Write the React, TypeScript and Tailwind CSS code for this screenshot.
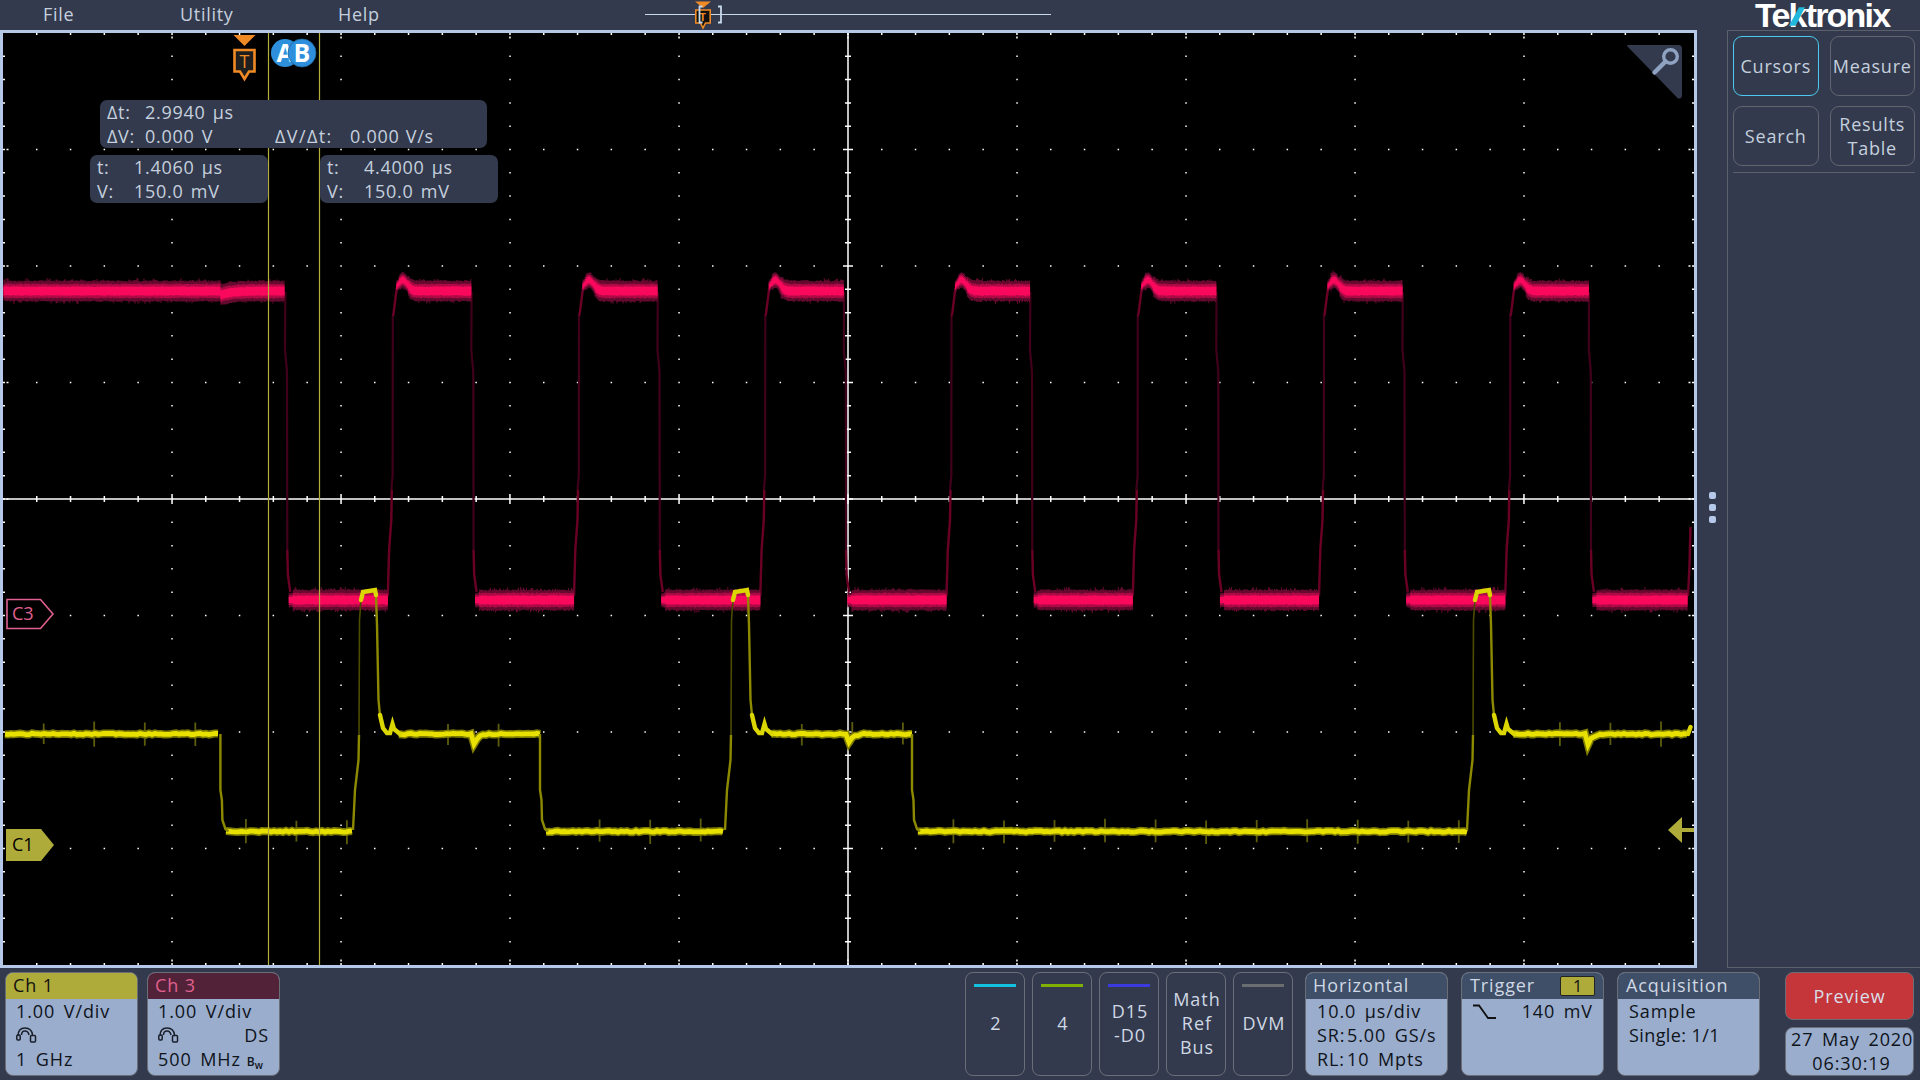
import React from 'react';

// seeded noise so the trace looks the same on every load
let seed = 12345;
const rnd = () => {
  seed = (seed * 16807) % 2147483647;
  return seed / 2147483647;
};
const f = (n: number) => n.toFixed(1);

const X0 = 3;
const Y0 = 33;
const X1 = 1694;
const Y1 = 965;
const DX = 33.8;

// ---- red trace (C3) ----
const redFalls = [0, 1, 2, 3, 4, 5, 6, 7].map((k) => 285.3 + 186.25 * k);
const redRises = redFalls.map((x) => x + 101.5);

function buildRed() {
  const layers = ['', '', ''];
  const col = (x: number, c: number, scale: number) => {
    const dim = 9.5 + (rnd() > 0.8 ? 3.5 * rnd() : 1.5 * rnd());
    const dim2 = 9.5 + (rnd() > 0.8 ? 3.5 * rnd() : 1.5 * rnd());
    layers[0] += `M${f(x)} ${f(c - dim * scale)}V${f(c + dim2 * scale)}`;
    layers[1] += `M${f(x)} ${f(c - (6.5 + rnd()) * scale)}V${f(c + (6.5 + rnd()) * scale)}`;
    layers[2] += `M${f(x)} ${f(c - (4 + rnd() * 0.8) * scale)}V${f(c + (4 + rnd() * 0.8) * scale)}`;
  };
  for (let x = 4; x < 285; x += 1) {
    const dip = x >= 221 ? 4 * Math.exp(-(x - 221) / 10) : 0;
    col(x, 291 + dip, 1);
  }
  redRises.forEach((xr, i) => {
    const end = redFalls[i + 1];
    if (!end) return;
    for (let x = xr + 10; x < end; x += 1) {
      const t = x - xr;
      const c = 291 - 11 * Math.exp(-Math.pow((t - 16) / 6.5, 2));
      const s = t < 13 ? 0.55 : t < 22 ? 0.75 : 1;
      col(x, c, s);
    }
  });
  redFalls.forEach((xf, i) => {
    const end = i === 7 ? 1688 : redRises[i] + 1;
    for (let x = xf + 4; x < end; x += 1) {
      const s = x < xf + 8 ? 0.7 : 1;
      col(x, 600, s);
    }
  });
  return layers;
}
const redLayers = buildRed();

const poly = (pts: number[][]) => pts.map((p, i) => (i ? 'L' : 'M') + f(p[0]) + ' ' + f(p[1])).join('');

const redDim =
  redFalls.map((x) => poly([[x, 292], [x - 0.3, 350], [x + 1.7, 372], [x + 2, 550]])).join('') +
  redRises.slice(0, 7).map((x) => poly([[x + 4.5, 490], [x + 5.8, 476], [x + 6, 316]])).join('');
const redMid =
  redFalls.map((x) => poly([[x + 2, 550], [x + 2.6, 575], [x + 5, 592]])).join('') +
  redRises.slice(0, 7).map((x) => poly([[x + 1, 596], [x + 2.3, 550], [x + 4.5, 520], [x + 5, 490]])).join('') +
  redRises.slice(0, 7).map((x) => poly([[x + 6, 316], [x + 6.8, 313], [x + 10, 288]])).join('') +
  poly([[1688, 596], [1689.5, 565], [1690.5, 527]]);

// ---- yellow trace (C1) ----
const HI = 734;
const LO = 831.5;
const yFalls = [220.4, 540, 912];
const yRises = [353, 725, 1467];
const notches = [473, 847.5, 1587];

function flat(x0: number, x1: number, y: number) {
  const pts: number[][] = [];
  for (let x = x0; x <= x1; x += 3) {
    let d = 0;
    for (const n of notches) {
      if (y === HI && x >= n && x < n + 16) d = 13 * Math.exp(-(x - n) / 4);
    }
    pts.push([x, y + d + (rnd() - 0.5) * 1.4]);
  }
  return pts;
}

const yBright = [
  flat(5, 220, HI),
  flat(226, yRises[0], LO),
  flat(399, yFalls[1], HI),
  flat(546, yRises[1], LO),
  flat(771, yFalls[2], HI),
  flat(918, yRises[2], LO),
  flat(1513, 1688, HI),
]
  .map(poly)
  .join('');

const yRiseLow = (r: number) => poly([[r, 830], [r + 2, 790], [r + 5.5, 760], [r + 6, 735]]);
const yRiseUp = (r: number) => poly([[r + 6, 735], [r + 6.5, 620], [r + 8, 600]]);
const yTop = (r: number) => poly([[r + 8, 600], [r + 10, 592], [r + 22, 590], [r + 23, 595]]);
const yTail = (r: number) => poly([[r + 23, 595], [r + 24, 625], [r + 25.5, 700], [r + 27, 715]]);
const yFoot = (r: number) => poly([[r + 27, 715], [r + 30, 728], [r + 34, 733], [r + 37, 733], [r + 39.5, 724], [r + 41, 729], [r + 47, 734]]);
const yFall = (x: number) => poly([[x, 734], [x, 790], [x + 1.5, 800], [x + 2, 820], [x + 5, 829], [x + 8, 831.5]]);

const yMid = yRises.map(yRiseLow).join('') + yFalls.map(yFall).join('') + yRises.map(yTail).join('');
const yDim = yRises.map(yRiseUp).join('');
const yTops = yRises.map(yTop).join('') + yRises.map(yFoot).join('') + poly([[1688, 734], [1690.5, 727]]);

function buildSpikes() {
  let d = '';
  for (let k = 0; k < 33; k++) {
    const x = 43.7 + 50.54 * k;
    let y = -1;
    if (x < 215 || (x > 402 && x < 538) || (x > 772 && x < 908) || (x > 1514 && x < 1690)) y = HI;
    if ((x > 232 && x < 350) || (x > 552 && x < 722) || (x > 924 && x < 1464)) y = LO;
    if (y < 0) continue;
    d += `M${f(x)} ${f(y - 10 - rnd() * 3)}V${f(y + 10 + rnd() * 3)}`;
  }
  return d;
}
const ySpikes = buildSpikes();

// ---- graticule ----
function buildGrid() {
  let dots = '';
  const dot = (x: number, y: number) => {
    dots += `M${f(x)} ${f(y - 0.75)}h1.5v1.5h-1.5z`;
  };
  for (let i = 1; i < 10; i++) {
    const x = X0 + 169 * i;
    if (i === 5) continue;
    for (let j = 1; j < 40; j++) dot(x - 0.75, 33 + (j * 932) / 40);
  }
  for (let i = 1; i < 8; i++) {
    const y = 33 + 116.5 * i;
    if (i === 4) continue;
    for (let j = 1; j < 50; j++) dot(X0 + j * DX - 0.75, y);
  }
  // edge ticks
  for (let j = 1; j < 50; j++) {
    const x = X0 + j * DX - 0.75;
    const major = j % 5 === 0;
    dots += `M${f(x)} ${Y0}h1.5v2h-1.5z`;
    dots += `M${f(x)} ${Y1 - 2}h1.5v2h-1.5z`;
    if (major) {
      dots += `M${f(x)} ${Y0 + 3.5}h1.5v2h-1.5z`;
      dots += `M${f(x)} ${Y1 - 5.5}h1.5v2h-1.5z`;
    }
  }
  for (let j = 1; j < 40; j++) {
    const y = 33 + (j * 932) / 40 - 0.75;
    const major = j % 5 === 0;
    dots += `M${X0} ${f(y)}h2v1.5h-2z`;
    dots += `M${X1 - 2} ${f(y)}h2v1.5h-2z`;
    if (major) {
      dots += `M${X0 + 3.5} ${f(y)}h2v1.5h-2z`;
      dots += `M${X1 - 5.5} ${f(y)}h2v1.5h-2z`;
    }
  }
  // centre line ticks
  for (let j = 1; j < 50; j++) {
    const x = X0 + j * DX - 0.75;
    const h = j % 5 === 0 ? 5 : 3;
    dots += `M${f(x)} ${499 - h}h1.5v${h * 2}h-1.5z`;
  }
  for (let j = 1; j < 40; j++) {
    const y = 33 + (j * 932) / 40 - 0.75;
    const w = j % 5 === 0 ? 5 : 3;
    dots += `M${848 - w} ${f(y)}h${w * 2}v1.5h-${w * 2}z`;
  }
  return dots;
}
const gridDots = buildGrid();

function Scope() {
  return (
    <svg className="absolute inset-0 w-full h-full" viewBox={`${X0} ${Y0} ${X1 - X0} ${Y1 - Y0}`}>
      <path d={gridDots} fill="#fff" />
      <path d="M848 33V965M3 499H1694" stroke="#fff" strokeWidth="1.5" fill="none" />

      {/* C3 */}
      <path d={redDim} stroke="#40001a" strokeWidth="2.2" fill="none" />
      <path d={redMid} stroke="#6a0026" strokeWidth="2.4" fill="none" />
      <path d={redLayers[0]} stroke="#640a2e" strokeWidth="1.1" />
      <path d={redLayers[1]} stroke="#b00a46" strokeWidth="1.1" />
      <path d={redLayers[2]} stroke="#fa085c" strokeWidth="1.1" />

      {/* C1 */}
      <path d={ySpikes} stroke="#5c5c0c" strokeWidth="1.8" fill="none" />
      <path d={yBright} stroke="#7d7b00" strokeWidth="8" fill="none" />
      <path d={yBright} stroke="#e8e100" strokeWidth="4.8" fill="none" />
      <path d={yDim} stroke="#4c4c00" strokeWidth="1.6" fill="none" />
      <path d={yMid} stroke="#8d8a00" strokeWidth="2.4" fill="none" />
      <path d={yTops} stroke="#dcd600" strokeWidth="4.4" fill="none" strokeLinecap="round" />

      {/* cursors */}
      <path d="M268.5 33V965M319.5 33V965" stroke="#b5ad3c" strokeWidth="1.2" />

      {/* trigger position */}
      <path d="M233.5 35H255.5L244.5 46Z" fill="#f08a24" />
      <path d="M234.5 50H254.5V71.5H249L244.5 79L240 71.5H234.5Z" fill="#1f1f1f" stroke="#f08a24" strokeWidth="2.6" />
      <text x="244.5" y="68" textAnchor="middle" fontFamily="Open Sans, sans-serif" fontSize="18" fill="#f08a24">T</text>

      {/* cursor handles */}
      <circle cx="285" cy="53" r="14" fill="#2e90dc" />
      <text x="285" y="62" textAnchor="middle" fontFamily="Open Sans, sans-serif" fontWeight="700" fontSize="25" fill="#fff">A</text>
      <circle cx="302" cy="53" r="14" fill="#2e90dc" stroke="#20639b" strokeWidth="0.8" />
      <text x="302" y="62" textAnchor="middle" fontFamily="Open Sans, sans-serif" fontWeight="700" fontSize="25" fill="#fff">B</text>

      {/* zoom corner */}
      <path d="M1628 45H1678.5Q1682 45 1682 48.5V95Q1682 99 1678 98.5L1628 47Q1626 45 1628 45Z" fill="#333a4d" />
      <circle cx="1670.5" cy="56.5" r="6.8" fill="none" stroke="#8fa2c2" strokeWidth="3.4" />
      <path d="M1665.5 61.5L1654.5 72.5" stroke="#8fa2c2" strokeWidth="4.5" strokeLinecap="round" />

      {/* channel markers */}
      <path d="M7 599.5H40.5L53 614L40.5 628.5H7Z" fill="#000" stroke="#e0608f" strokeWidth="1.6" />
      <text x="12" y="620" fontFamily="Open Sans, sans-serif" fontSize="18" fill="#e0608f">C3</text>
      <path d="M6 829H41L54 845L41 861H6Z" fill="#aeab3b" />
      <text x="12" y="851" fontFamily="Open Sans, sans-serif" fontSize="18" fill="#000">C1</text>

      {/* trigger level */}
      <path d="M1668 830L1682 817V843Z" fill="#aeab3b" />
      <path d="M1680 830H1694" stroke="#aeab3b" strokeWidth="4" />
    </svg>
  );
}

function Readout({ className, children }: { className: string; children: React.ReactNode }) {
  return (
    <div className={'absolute rounded-[7px] bg-[#333a4d] text-[#c5d0de] text-[18px] leading-[24px] tracking-[0.7px] [word-spacing:2px] whitespace-pre ' + className}>
      {children}
    </div>
  );
}

function ProbeIcon() {
  return (
    <svg width="21" height="16" viewBox="0 0 21 16" fill="none" stroke="#1a1f2a" strokeWidth="1.5">
      <path d="M2 9C2 3.5 5 1 9 1C13 1 16 3.5 16.5 8" />
      <path d="M5.5 8C5.5 5.5 7 4 9 4C11 4 12.5 5.5 13 8" />
      <rect x="0.8" y="8" width="3.4" height="5" rx="1" />
      <rect x="14.5" y="8.5" width="5" height="6.5" rx="1" />
    </svg>
  );
}

function Badge({ title, titleClass, headClass, children, className }: {
  title: string;
  titleClass: string;
  headClass: string;
  children: React.ReactNode;
  className: string;
}) {
  return (
    <div className={'rounded-[8px] border border-[#6a6e76] overflow-hidden flex flex-col bg-[#9aadcd] text-[#0f131a] text-[18px] leading-[24px] tracking-[0.9px] [word-spacing:3px] ' + className}>
      <div className={'h-[26px] flex items-center justify-between shrink-0 pb-[2px] [word-spacing:0px] ' + headClass}>
        <span className={titleClass}>{title}</span>
      </div>
      {children}
    </div>
  );
}

function ChanButton({ bar, children }: { bar: string; children: React.ReactNode }) {
  return (
    <div className="w-[60px] rounded-[8px] border border-[#6a6e76] relative flex items-center justify-center text-center text-[#cfd8e4] text-[18px] leading-[24px] tracking-[1px]">
      <div className={'absolute top-[11px] left-[8px] w-[42px] h-[3px] ' + bar} />
      <div className="pb-[2px] pl-[2px]">{children}</div>
    </div>
  );
}

function SideButton({ active, children }: { active?: boolean; children: React.ReactNode }) {
  return (
    <div className={'h-[60px] rounded-[9px] border flex items-center justify-center text-center text-[#c5d0de] text-[18px] leading-[24px] tracking-[0.8px] ' + (active ? 'border-[#4cc9ee]' : 'border-[#62666e]')}>
      <div>{children}</div>
    </div>
  );
}

export default function App() {
  return (
    <div className="w-[1920px] h-[1080px] bg-[#333a4d] overflow-hidden flex flex-col font-['Open_Sans','Noto_Sans',sans-serif]">
      {/* menu bar */}
      <div className="h-[30px] flex items-center text-[#c5d0de] text-[18px] tracking-[0.7px] shrink-0">
        <div className="w-[180px] pl-[43px] pb-[2px]">File</div>
        <div className="w-[158px] pb-[2px]">Utility</div>
        <div className="w-[307px] pb-[2px]">Help</div>
        <div className="w-[406px] h-full relative flex items-center">
          <div className="w-full h-[1.5px] bg-[#c8d8ec] -mt-[1px]" />
          <svg className="absolute left-[50px] top-0" width="32" height="30" viewBox="0 0 32 30">
            <path d="M0 1.5H16L8 8Z" fill="#f08a24" />
            <path d="M0.8 10H15.2V23H10.5L8 28L5.5 23H0.8Z" fill="#111" stroke="#f08a24" strokeWidth="1.6" />
            <text x="8" y="21" textAnchor="middle" fontFamily="Open Sans, sans-serif" fontSize="11" fontWeight="700" fill="#f08a24">T</text>
            <path d="M7.5 6.5H4.5V22.5H7.5M23 6.5H26V22.5H23" fill="none" stroke="#c8d8ec" strokeWidth="1.8" />
          </svg>
        </div>
        <div className="ml-[704px] w-[140px] relative h-full whitespace-nowrap text-white font-['Liberation_Sans',sans-serif] font-bold text-[34px] leading-[30px] tracking-[-1.8px]">
          Tektronix
          <svg className="absolute left-0 top-0" width="60" height="30" viewBox="0 0 60 30">
            <path d="M34 25.7H40.7L50 7.3H44Z" fill="#22b8dc" />
          </svg>
        </div>
      </div>

      {/* middle */}
      <div className="flex h-[938px] shrink-0">
        <div className="w-[1697px] border-[3px] border-[#b5c8e8] bg-black relative">
          <Scope />
          <Readout className="left-[97px] top-[67px] w-[387px] h-[48px]">
            <div className="flex pl-[7px]"><span className="w-[38px]">Δt:</span><span>2.9940 µs</span></div>
            <div className="flex pl-[7px]">
              <span className="w-[38px]">ΔV:</span>
              <span className="w-[130px]">0.000 V</span>
              <span className="w-[75px] tracking-[1.4px]">ΔV/Δt:</span>
              <span className="[word-spacing:1px]">0.000 V/s</span>
            </div>
          </Readout>
          <Readout className="left-[87px] top-[122px] w-[178px] h-[48px]">
            <div className="flex pl-[7px]"><span className="w-[37px]">t:</span><span>1.4060 µs</span></div>
            <div className="flex pl-[7px]"><span className="w-[37px]">V:</span><span>150.0 mV</span></div>
          </Readout>
          <Readout className="left-[317px] top-[122px] w-[178px] h-[48px]">
            <div className="flex pl-[7px]"><span className="w-[37px]">t:</span><span>4.4000 µs</span></div>
            <div className="flex pl-[7px]"><span className="w-[37px]">V:</span><span>150.0 mV</span></div>
          </Readout>
        </div>
        <div className="w-[30px] flex flex-col items-center justify-center gap-[5px] pt-[17px]">
          <div className="w-[7px] h-[7px] rounded-[2px] bg-[#b5c8e8]" />
          <div className="w-[7px] h-[7px] rounded-[2px] bg-[#b5c8e8]" />
          <div className="w-[7px] h-[7px] rounded-[2px] bg-[#b5c8e8]" />
        </div>
        <div className="flex-1 border-l border-t border-b border-[#5c6068] pl-[5px] pr-[5px] pt-[5px]">
          <div className="grid grid-cols-2 gap-x-[11px] gap-y-[10px]">
            <SideButton active>Cursors</SideButton>
            <SideButton>Measure</SideButton>
            <SideButton>Search</SideButton>
            <SideButton>Results<br />Table</SideButton>
          </div>
          <div className="h-px bg-[#5c6068] mt-[6px]" />
        </div>
      </div>

      {/* settings bar */}
      <div className="flex pt-[4px] pl-[5px] h-[112px] shrink-0">
        <Badge className="w-[133px] h-[104px]" headClass="bg-[#aeab3b] pl-[7px]" titleClass="text-[#111]" title="Ch 1">
          <div className="pl-[10px]">
            <div>1.00 V/div</div>
            <div className="h-[24px] flex items-center"><ProbeIcon /></div>
            <div>1 GHz</div>
          </div>
        </Badge>
        <Badge className="w-[133px] h-[104px] ml-[9px]" headClass="bg-[#522338] pl-[7px]" titleClass="text-[#e0608f]" title="Ch 3">
          <div className="pl-[10px]">
            <div>1.00 V/div</div>
            <div className="h-[24px] flex items-center justify-between pr-[10px]"><ProbeIcon /><span>DS</span></div>
            <div className="flex items-baseline whitespace-nowrap">500 MHz<span className="ml-[6px] text-[12px] leading-none font-semibold tracking-normal">B<sub className="text-[10px]">w</sub></span></div>
          </div>
        </Badge>

        <div className="flex gap-[7px] ml-[685px] h-[104px]">
          <ChanButton bar="bg-[#13c0e0]">2</ChanButton>
          <ChanButton bar="bg-[#7fb000]">4</ChanButton>
          <ChanButton bar="bg-[#3a3adf]">D15<br />-D0</ChanButton>
          <ChanButton bar="hidden">Math<br />Ref<br />Bus</ChanButton>
          <ChanButton bar="bg-[#6a6e70]">DVM</ChanButton>
        </div>

        <Badge className="w-[143px] h-[104px] ml-[12px]" headClass="bg-[#3f4f68] pl-[7px]" titleClass="text-[#cfd8e4]" title="Horizontal">
          <div className="pl-[11px] whitespace-nowrap">
            <div>10.0 µs/div</div>
            <div className="flex"><span className="w-[30px]">SR:</span>5.00 GS/s</div>
            <div className="flex"><span className="w-[30px]">RL:</span>10 Mpts</div>
          </div>
        </Badge>
        <Badge className="w-[143px] h-[104px] ml-[13px] relative" headClass="bg-[#3f4f68] pl-[8px]" titleClass="text-[#cfd8e4]" title="Trigger">
          <div className="absolute left-[98px] top-[3px] w-[35px] h-[20px] rounded-[2px] bg-[#aeab3b] border border-[#222] flex items-center justify-center text-[#111] text-[16px] tracking-normal">1</div>
          <div className="flex items-center pl-[11px] pr-[10px] justify-between">
            <svg width="23" height="15" viewBox="0 0 23 15" fill="none" stroke="#111" strokeWidth="1.8"><path d="M0 1.5H6L15 14H23" /></svg>
            <span>140 mV</span>
          </div>
        </Badge>
        <Badge className="w-[143px] h-[104px] ml-[13px]" headClass="bg-[#3f4f68] pl-[8px]" titleClass="text-[#cfd8e4]" title="Acquisition">
          <div className="pl-[11px]">
            <div>Sample</div>
            <div className="tracking-[0.4px] [word-spacing:0px]">Single: 1/1</div>
          </div>
        </Badge>

        <div className="w-[129px] ml-[25px] h-[104px] flex flex-col gap-[7px]">
          <div className="h-[48px] rounded-[8px] border border-[#6a6e76] bg-[#c4363a] text-[#d9dfe8] text-[18px] tracking-[0.9px] flex items-center justify-center">Preview</div>
          <div className="h-[49px] rounded-[8px] border border-[#6a6e76] bg-[#9aadcd] text-[#0f131a] text-[18px] leading-[24px] tracking-[0.9px] [word-spacing:3px] overflow-hidden text-center">
            <div className="w-[122px] ml-[5px] -mt-[1px] overflow-hidden whitespace-nowrap text-left">27 May 2020</div>
            <div className="pl-[4px]">06:30:19</div>
          </div>
        </div>
      </div>
    </div>
  );
}
